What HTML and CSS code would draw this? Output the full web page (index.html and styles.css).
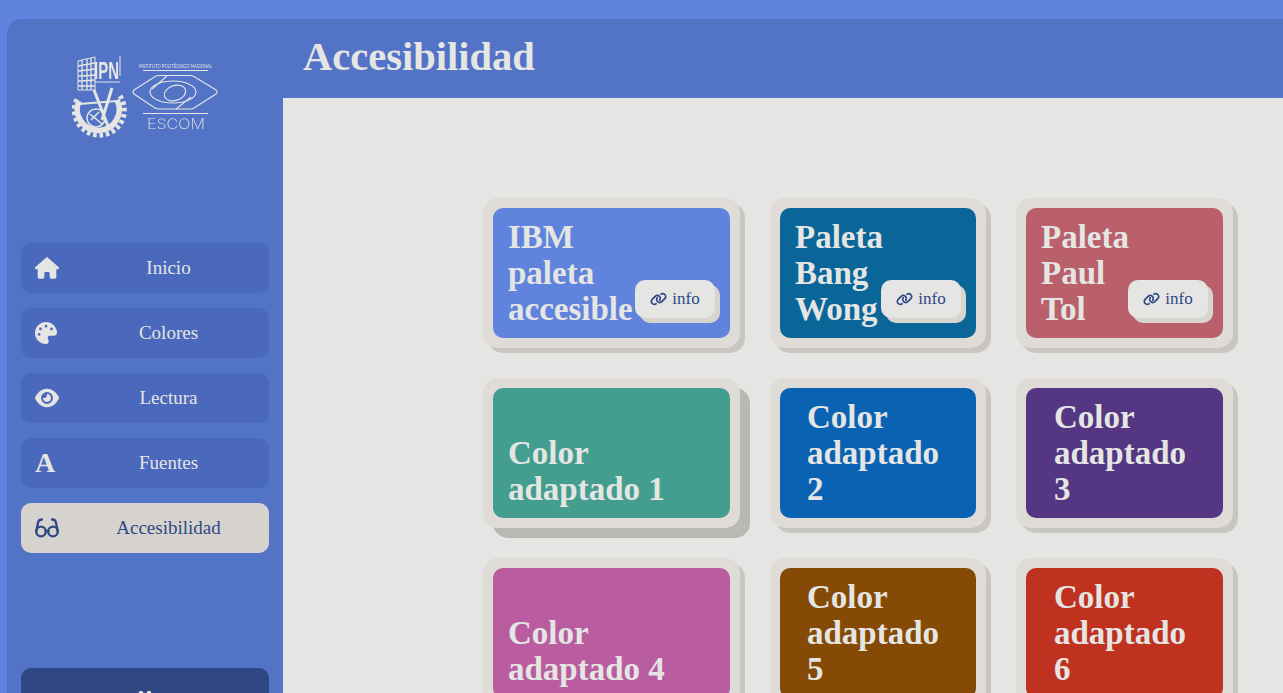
FILE: index.html
```html
<!DOCTYPE html>
<html lang="es">
<head>
<meta charset="utf-8">
<title>Accesibilidad</title>
<link rel="stylesheet" href="styles.css">
</head>
<body>
<svg class="defs" width="0" height="0"><defs><symbol id="link" viewBox="0 0 640 512"><path fill="currentColor" d="M579.800 267.700c56.500-56.500 56.500-148 0-204.500c-50-50-128.800-56.500-186.300-15.400l-1.600 1.100c-14.400 10.300-17.700 30.300-7.400 44.600s30.300 17.700 44.600 7.400l1.600-1.100c32.100-22.900 76-19.300 103.800 8.600c31.500 31.500 31.500 82.500 0 114L422.300 334.800c-31.500 31.500-82.500 31.500-114 0c-27.900-27.900-31.500-71.800-8.600-103.800l1.100-1.600c10.300-14.400 6.900-34.400-7.400-44.600s-34.400-6.900-44.600 7.400l-1.100 1.600C206.500 251.200 213 330 263 380c56.500 56.500 148 56.500 204.500 0L579.800 267.700zM60.200 244.300c-56.500 56.500-56.500 148 0 204.500c50 50 128.800 56.500 186.300 15.400l1.600-1.100c14.400-10.300 17.700-30.300 7.400-44.600s-30.300-17.700-44.600-7.400l-1.600 1.100c-32.100 22.900-76 19.300-103.800-8.600C74 372 74 321 105.500 289.500L217.700 177.200c31.500-31.500 82.500-31.500 114 0c27.900 27.900 31.500 71.800 8.600 103.900l-1.100 1.600c-10.300 14.400-6.900 34.400 7.400 44.600s34.400 6.900 44.600-7.400l1.100-1.600C433.500 260.800 427 182 377 132c-56.500-56.500-148-56.500-204.500 0L60.200 244.300z"/></symbol></defs></svg>
<div class="shell">
  <aside class="sidebar">
    <div class="logo">
      <svg width="170" height="95" viewBox="0 0 170 95" fill="none" stroke="#e5e5e3">
        <path d="M60 46A25 25 0 1 1 17 49" stroke-width="5" stroke-dasharray="3.500 2.800"/>
        <path d="M57 50A21 21 0 1 1 19 51" stroke-width="5.500"/>
        <circle cx="36" cy="68" r="9" stroke-width="1.500"/>
        <path d="M31 70 39 62M30 64 42 74" stroke-width="1.500"/>
        <path d="M34 40 48 76M52 38 42 70" stroke-width="3"/>
        <path d="M19 54 57 51" stroke-width="2"/>
        <path d="M18 11 35 7V40H18Z" stroke-width="1"/>
        <path d="M18 16 35 13M18 21 35 19M18 26 35 25M18 31 35 30M18 36 35 36M22 10V40M27 9V40M31 8V40" stroke-width="1.300"/>
        <path d="M35 32H60M60 6V26" stroke-width="1"/>
        <text class="logo-ipn" x="34" y="29" textLength="25" lengthAdjust="spacingAndGlyphs">IPN</text>
        <text class="logo-small" x="79" y="18" textLength="73" lengthAdjust="spacingAndGlyphs">INSTITUTO POLITÉCNICO NACIONAL</text>
        <path d="M83 20.500H148M83 63.500H148" stroke-width="1.200"/>
        <path d="M74 40 96 26 Q97 25.500 99 25.500H130Q132 25.500 134 26.500L156 40Q158 42 156 44L134 58Q132 59 130 59H99Q97 59 95 58L74 44Q72 42 74 40Z" stroke-width="1.100"/>
        <ellipse cx="113" cy="42" rx="23" ry="11" stroke-width="1.100"/>
        <ellipse cx="115" cy="43" rx="11" ry="7.500" stroke-width="1.100" transform="rotate(-18 115 43)"/>
        <path d="M107 26 92 39M131 47 116 59" stroke-width="1.100"/>
        <text class="logo-escom" x="87" y="78.500" textLength="58" lengthAdjust="spacingAndGlyphs">ESCOM</text>
      </svg>
    </div>
    <nav class="menu">
      <a class="item">
        <svg class="ico" viewBox="0 0 576 512"><path fill="currentColor" d="M575.800 255.500c0 18-15 32.100-32 32.100h-32l.7 160.200c0 2.700-.2 5.400-.5 8.100V472c0 22.100-17.900 40-40 40H456c-1.100 0-2.200 0-3.300-.1c-1.400 .1-2.800 .1-4.200 .1H416 392c-22.100 0-40-17.900-40-40V448 384c0-17.700-14.300-32-32-32H256c-17.700 0-32 14.300-32 32v64 24c0 22.100-17.900 40-40 40H160 128.100c-1.500 0-3-.1-4.500-.2c-1.200 .1-2.400 .2-3.600 .2H104c-22.100 0-40-17.900-40-40V360c0-.9 0-1.900 .1-2.800V287.600H32c-18 0-32-14-32-32.100c0-9 3-17 10-24L266.400 8c7-7 15-8 22-8s15 2 21 7L564.800 231.500c8 7 12 15 11 24z"/></svg>
        <span class="label">Inicio</span>
      </a>
      <a class="item">
        <span class="ico"><svg class="palette" viewBox="0 0 512 512"><path fill="currentColor" d="M512 256c0 .9 0 1.800 0 2.700c-.4 36.500-33.600 61.300-70.100 61.300H344c-26.500 0-48 21.500-48 48c0 3.400 .4 6.700 1 9.900c2.100 10.200 6.500 20 10.800 29.900c6.100 13.800 12.100 27.500 12.100 42c0 31.800-21.600 60.700-53.400 62c-3.500 .1-7 .2-10.600 .2C114.600 512 0 397.400 0 256S114.600 0 256 0S512 114.600 512 256zM128 288a32 32 0 1 0 -64 0 32 32 0 1 0 64 0zm0-96a32 32 0 1 0 0-64 32 32 0 1 0 0 64zM288 96a32 32 0 1 0 -64 0 32 32 0 1 0 64 0zm96 96a32 32 0 1 0 0-64 32 32 0 1 0 0 64z"/></svg></span>
        <span class="label">Colores</span>
      </a>
      <a class="item">
        <svg class="ico" viewBox="0 0 576 512"><path fill="currentColor" d="M288 32c-80.800 0-145.500 36.800-192.600 80.600C48.600 156 17.300 208 2.500 243.700c-3.300 7.900-3.300 16.700 0 24.600C17.300 304 48.600 356 95.400 399.400C142.500 443.200 207.200 480 288 480s145.500-36.800 192.600-80.600c46.800-43.500 78.100-95.400 93-131.100c3.300-7.900 3.300-16.700 0-24.600c-14.900-35.700-46.200-87.700-93-131.100C433.500 68.800 368.800 32 288 32zM144 256a144 144 0 1 1 288 0 144 144 0 1 1 -288 0zm144-64c0 35.300-28.700 64-64 64c-7.100 0-13.900-1.200-20.300-3.300c-5.500-1.800-11.900 1.600-11.700 7.400c.3 6.900 1.300 13.800 3.200 20.700c13.700 51.200 66.400 81.600 117.600 67.900s81.600-66.400 67.900-117.600c-11.100-41.500-47.800-69.400-88.600-71.100c-5.800-.2-9.200 6.100-7.400 11.700c2.100 6.400 3.300 13.200 3.300 20.300z"/></svg>
        <span class="label">Lectura</span>
      </a>
      <a class="item">
        <span class="ico glyph">A</span>
        <span class="label">Fuentes</span>
      </a>
      <a class="item active">
        <svg class="ico" viewBox="0 0 24 24" fill="none" stroke="currentColor" stroke-width="2.300" stroke-linecap="round"><circle cx="6" cy="15.500" r="4.800"/><circle cx="18" cy="15.500" r="4.800"/><path d="M10.500 15h3M1.300 15 3.200 6Q3.800 3.500 7 3.500M22.700 15 20.800 6Q20.200 3.500 17 3.500"/></svg>
        <span class="label">Accesibilidad</span>
      </a>
    </nav>
    <div class="menu-bottom">
      <svg class="x-ico" viewBox="0 0 14 14" fill="none" stroke="currentColor" stroke-width="3.500"><path d="M2 0 12 14M12 0 2 14"/></svg>
    </div>
  </aside>
  <div class="content">
    <header class="topbar"><h1>Accesibilidad</h1></header>
    <main class="main">
      <div class="grid">
        <div class="card"><div class="face ibm"><p>IBM<br>paleta<br>accesible</p><a class="info"><svg class="chain"><use href="#link"/></svg>info</a></div></div>
        <div class="card"><div class="face bang"><p>Paleta<br>Bang<br>Wong</p><a class="info"><svg class="chain"><use href="#link"/></svg>info</a></div></div>
        <div class="card"><div class="face tol"><p>Paleta<br>Paul<br>Tol</p><a class="info"><svg class="chain"><use href="#link"/></svg>info</a></div></div>
        <div class="card raised"><div class="face c1"><p>Color<br>adaptado 1</p></div></div>
        <div class="card"><div class="face c2 inset"><p>Color<br>adaptado<br>2</p></div></div>
        <div class="card"><div class="face c3 inset"><p>Color<br>adaptado<br>3</p></div></div>
        <div class="card"><div class="face c4"><p>Color<br>adaptado 4</p></div></div>
        <div class="card"><div class="face c5 inset"><p>Color<br>adaptado<br>5</p></div></div>
        <div class="card"><div class="face c6 inset"><p>Color<br>adaptado<br>6</p></div></div>
      </div>
    </main>
  </div>
</div>
</body>
</html>
```
FILE: styles.css
```css
* { box-sizing: border-box; }
html, body { height: 100%; }
body {
  margin: 0;
  overflow: hidden;
  background: #6083dd;
  font-family: "Liberation Serif", "DejaVu Serif", serif;
  color: #e5e5e3;
}
.defs { position: absolute; }
.shell {
  display: flex;
  height: 693px;
  padding: 19px 0 0 7px;
  overflow: hidden;
}
.sidebar {
  flex: 0 0 276px;
  height: 760px;
  padding: 0 14px;
  background: #5373c6;
  border-top-left-radius: 15px;
}
.logo {
  height: 224px;
  padding: 31px 0 0 39px;
}
.logo svg {
  display: block;
  filter: blur(0.35px);
}
.logo-ipn { font: bold 24px "Liberation Sans", sans-serif; fill: #e5e5e3; stroke: none; }
.logo-small { font: 4.500px "Liberation Sans", sans-serif; fill: #e5e5e3; stroke: none; }
.logo-escom { font: 200 14px Inter, "Liberation Sans", sans-serif; fill: #e5e5e3; stroke: none; }
.menu {
  display: flex;
  flex-direction: column;
  gap: 15px;
}
.item {
  display: flex;
  align-items: center;
  height: 50px;
  padding-left: 14px;
  background: #4a69bd;
  border-radius: 10px;
  font-size: 19px;
}
.item.active {
  background: #d6d3cf;
  color: #2f4885;
}
.ico {
  flex: 0 0 24px;
  width: 24px;
  height: 24px;
  color: #e5e5e3;
}
.palette {
  display: block;
  width: 22px;
  height: 22px;
  margin: 1px 0 0;
}
.active .ico { color: #2f4885; }
.glyph {
  font-size: 28px;
  font-weight: bold;
  line-height: 24px;
}
.label {
  flex: 1;
  margin-left: 9px;
  text-align: center;
}
.menu-bottom {
  display: flex;
  justify-content: center;
  height: 70px;
  margin-top: 115px;
  padding-top: 23px;
  background: #2f4885;
  border-radius: 10px;
}
.x-ico {
  width: 14px;
  height: 14px;
  color: #e5e5e3;
}
.content {
  flex: 1;
  display: flex;
  flex-direction: column;
  min-width: 0;
}
.topbar {
  flex: 0 0 79px;
  padding-left: 20px;
  background: #5373c6;
}
.topbar h1 {
  margin: 0;
  font-size: 40.5px;
  line-height: 76px;
  font-weight: bold;
}
.main {
  flex: 1;
  padding: 100px 50px 0 200px;
  background: #e5e5e3;
}
.grid {
  display: grid;
  grid-template-columns: 257px 216px 217px;
  grid-auto-rows: 150px;
  gap: 30px;
}
.card {
  padding: 10px;
  background: #dfdcd8;
  border-radius: 15px;
  box-shadow: 5px 5px 0 #c9c5bf;
}
.card.raised { box-shadow: 10px 10px 0 #b9b8b2; }
.face {
  position: relative;
  display: flex;
  align-items: flex-end;
  height: 100%;
  padding: 0 0 11px 15px;
  border-radius: 10px;
}
.face.inset { padding-left: 27px; }
.face.c3, .face.c6 { padding-left: 28px; }
.face p {
  margin: 0;
  font-size: 33px;
  line-height: 36px;
  font-weight: bold;
}
.ibm { background: #6083dd; }
.bang { background: #0a6699; }
.tol { background: #b9606b; }
.c1 { background: #449e90; }
.c2 { background: #0a62b3; }
.c3 { background: #543682; }
.c4 { background: #b95da0; }
.c5 { background: #854a06; }
.c6 { background: #c03220; }
.info {
  position: absolute;
  right: 15px;
  bottom: 20px;
  display: flex;
  align-items: center;
  justify-content: center;
  gap: 5px;
  width: 80px;
  height: 38px;
  background: #e5e5e3;
  border-radius: 10px;
  box-shadow: 5px 5px 0 #d8d4cf;
  color: #2f4885;
  font-size: 17px;
}
.chain { width: 17px; height: 14px; }
```
